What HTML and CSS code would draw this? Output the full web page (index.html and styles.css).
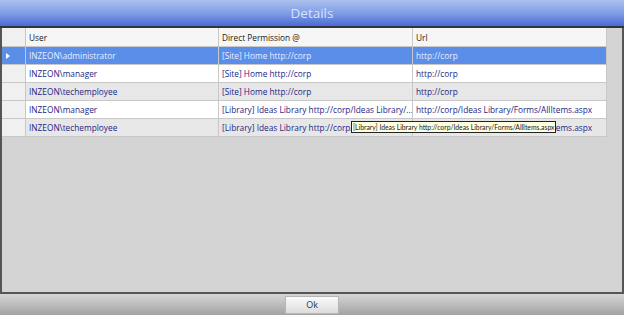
FILE: index.html
```html
<!DOCTYPE html>
<html>
<head>
<meta charset="utf-8">
<link rel="stylesheet" href="styles.css">
<title>Details</title>
</head>
<body>

<div class="window">
<div class="titlebar">Details</div>

<div class="gridarea">
<table class="grid">
<tr class="head">
<th class="rowhead"></th>
<th class="c1">User</th>
<th class="c2">Direct Permission @</th>
<th class="c3">Url</th>
</tr>
<tr class="sel">
<td class="rowhead"><span class="arrow"></span></td>
<td>INZEON\administrator</td>
<td>[Site] Home http://corp</td>
<td>http://corp</td>
</tr>
<tr>
<td class="rowhead"></td>
<td>INZEON\manager</td>
<td>[Site] Home http://corp</td>
<td>http://corp</td>
</tr>
<tr class="alt">
<td class="rowhead"></td>
<td>INZEON\techemployee</td>
<td>[Site] Home http://corp</td>
<td>http://corp</td>
</tr>
<tr>
<td class="rowhead"></td>
<td>INZEON\manager</td>
<td>[Library] Ideas Library http://corp/Ideas Library/...</td>
<td>http://corp/Ideas Library/Forms/AllItems.aspx</td>
</tr>
<tr class="alt">
<td class="rowhead"></td>
<td>INZEON\techemployee</td>
<td>[Library] Ideas Library http://corp/Ideas Library/...</td>
<td>http://corp/Ideas Library/Forms/AllItems.aspx</td>
</tr>
</table>
<div class="tooltip">[Library] Ideas Library http://corp/Ideas Library/Forms/AllItems.aspx</div>
</div>

<div class="footer">
<button class="okbtn">Ok</button>
</div>
</div>

</body>
</html>
```

FILE: styles.css
```css
body { margin: 0; background-color: #d4d4d4; font-family: "Open Sans", "DejaVu Sans", sans-serif; }

.window { width: 624px; height: 315px; display: flex; flex-direction: column; overflow: hidden; }

.titlebar { height: 26px; line-height: 26px; text-align: center;
            color: #d8e2fa; font-size: 13.5px;
            background: linear-gradient(#adc1ee, #809ee6 50%, #4a6ad6);
            border-bottom: 2px solid #2e3440; }

.gridarea { position: relative; flex: 1; background-color: #d4d4d4;
            border-left: 2px solid #555; border-right: 2px solid #555;
            border-bottom: 2px solid #555; }

table.grid { border-collapse: collapse; width: 604px; table-layout: fixed;
             font-size: 8.3px; color: #1e1e82; }
table.grid th, table.grid td { height: 17px; padding: 0 0 0 3px; text-align: left;
             white-space: nowrap; overflow: hidden;
             border-right: 1px solid #c8c8c8; border-bottom: 1px solid #c8c8c8; }
table.grid th { font-weight: normal; color: #1a1a1a; background-color: #f6f6f6; height: 18px; }
table.grid .rowhead { width: 23px; padding: 0; background-color: #f0f0f0; }
table.grid .c1 { width: 189px; }
table.grid .c2 { width: 190px; }
table.grid .c3 { width: 190px; }

tr.sel td, tr.sel td.rowhead { background-color: #5b8ee8; color: #e6eeff; }
tr.alt td { background-color: #e7e7e7; }
tr td { background-color: #ffffff; }

.arrow { display: inline-block; margin-left: 4px; width: 0; height: 0;
         border-left: 4px solid #fff; border-top: 3px solid transparent;
         border-bottom: 3px solid transparent; }

.tooltip { position: absolute; left: 349px; top: 93px; padding: 0 1px;
           font-size: 6.8px; line-height: 10px; color: #222; font-family: "Lato", sans-serif;
           background-color: #ffffe1; border: 1px solid #222; }

.footer { height: 21px; display: flex; justify-content: center; align-items: center;
          background: linear-gradient(#d6d6d6, #a2a2a2); }

.okbtn { width: 54px; height: 18px; font-family: inherit; font-size: 9px; color: #333;
         background: linear-gradient(#fafafa, #dcdcdc); border: 1px solid #b5b5b5; }
```
